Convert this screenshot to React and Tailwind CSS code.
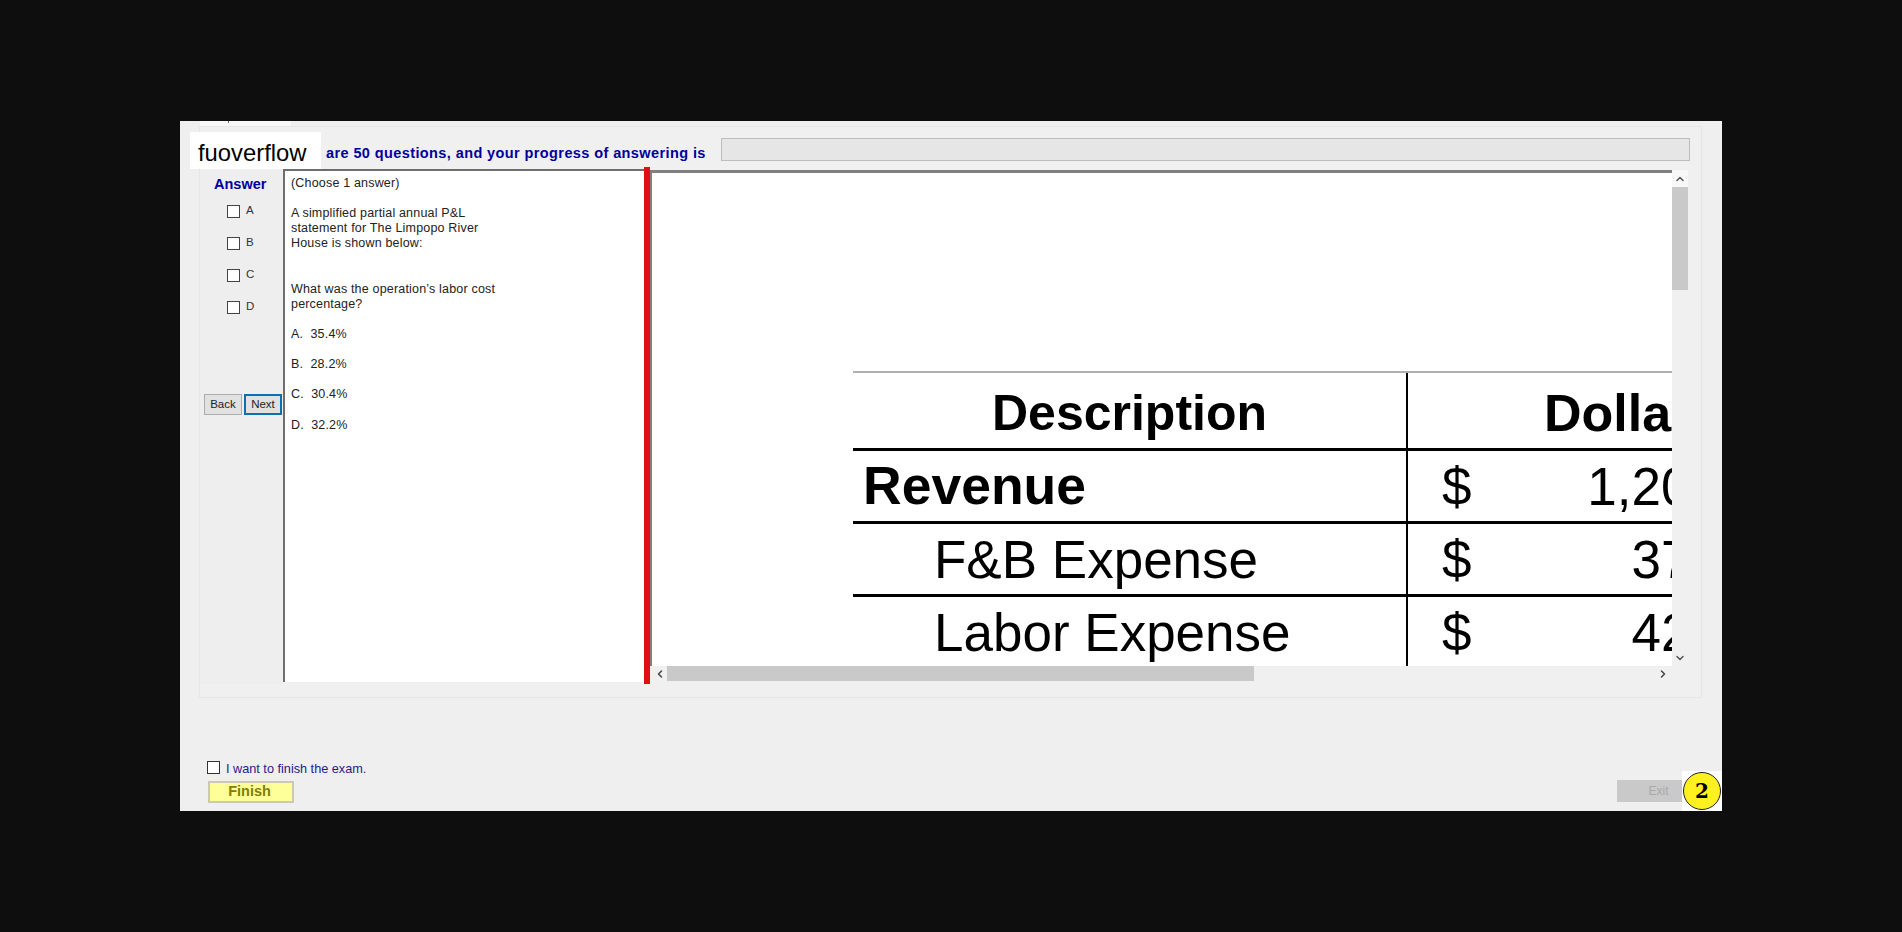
import React from "react";
import { ChevronUp, ChevronDown, ChevronLeft, ChevronRight } from "lucide-react";

const answers = ["A", "B", "C", "D"];
const choices = ["A.  35.4%", "B.  28.2%", "C.  30.4%", "D.  32.2%"];

const rows = [
  { label: "Revenue", amount: "1,200,000", bold: true },
  { label: "F&B Expense", amount: "375,000" },
  { label: "Labor Expense", amount: "425,000" },
];

const TableRow = ({ label, amount, bold }) => (
  <div className="flex h-[73px] shrink-0 border-t-[3px] border-black text-[53px] leading-none text-black">
    <div
      className={
        bold
          ? "flex w-[555px] shrink-0 items-center border-r-2 border-black pl-[10px] text-[53.5px] font-bold"
          : "flex w-[555px] shrink-0 items-center border-r-2 border-black pl-[81px]"
      }
    >
      {label}
    </div>
    <div className="flex w-[415px] shrink-0 items-center justify-between pl-[34px]">
      <span>$</span>
      <span>{amount}</span>
    </div>
  </div>
);

const App = () => {
  return (
    <div className="h-[932px] w-full overflow-hidden bg-[#0e0e0e] pl-[180px] pt-[121px] font-['Liberation_Sans',Arial,sans-serif]">
      <div className="relative flex h-[690px] w-[1542px] flex-col bg-[#efefef]">
        <div className="relative ml-[20px] h-[5px] w-[91px] bg-[#f8f8f8]">
          <div className="absolute left-[28px] top-0 h-[2px] w-[1px] bg-[#666666]"></div>
        </div>

        {/* tab page */}
        <div className="ml-[19px] flex h-[572px] w-[1503px] flex-col border border-[#e6e6e6] bg-[#f0f0f0]">
          <div className="flex h-[40px] shrink-0">
            <div className="ml-[126px] mt-[18px] w-[395px] whitespace-nowrap text-[14.5px] font-bold leading-4 tracking-[0.4px] text-[#00009a]">
              are 50 questions, and your progress of answering is
            </div>
            <div className="mt-[11px] h-[23px] w-[969px] border border-[#bdbdbd] bg-[#e6e6e6]"></div>
          </div>

          <div className="flex h-[517px] shrink-0">
            {/* answers */}
            <div className="flex w-[83px] shrink-0 flex-col bg-[#eeeeee]">
              <div className="mt-[10px] h-[18px] pl-[14px] text-[14.5px] font-bold leading-[14px] text-[#00009a]">
                Answer
              </div>
              {answers.map((a) => (
                <div key={a} className="flex h-[32px] items-center pl-[27px]">
                  <div className="h-[13px] w-[13px] border border-[#444444] bg-white"></div>
                  <span className="ml-[6px] text-[11.5px] text-[#333333]">{a}</span>
                </div>
              ))}
              <div className="ml-[4px] mt-[70px] flex gap-[2px] pt-[1px] text-[11.5px] text-[#222222]">
                <div className="flex h-[21px] w-[38px] shrink-0 items-center justify-center border border-[#adadad] bg-[#e1e1e1]">
                  Back
                </div>
                <div className="flex h-[21px] w-[38px] shrink-0 items-center justify-center border-2 border-[#0a70b4] bg-[#e1e1e1]">
                  Next
                </div>
              </div>
            </div>

            {/* question */}
            <div className="mt-[2px] h-[513px] w-[361px] shrink-0 border-l-2 border-t-2 border-[#6e6e6e] bg-white pl-[6px] pt-[5px] text-[12.5px] leading-[15px] tracking-[0.18px] text-[#222222]">
              <p>(Choose 1 answer)</p>
              <p className="mt-[15px]">
                A simplified partial annual P&amp;L
                <br />
                statement for The Limpopo River
                <br />
                House is shown below:
              </p>
              <p className="mt-[31px]">
                What was the operation’s labor cost
                <br />
                percentage?
              </p>
              {choices.map((c) => (
                <p key={c} className="mt-[15px] whitespace-pre last:mt-[15.5px]">
                  {c}
                </p>
              ))}
            </div>

            <div className="h-[517px] w-[6px] shrink-0 bg-[#e00f14]"></div>

            {/* exhibit */}
            <div className="mt-[3px] flex h-[511px] w-[1038px] shrink-0 flex-col">
              <div className="flex h-[496px] shrink-0">
                <div className="flex w-[1022px] flex-col border-l-2 border-t-[3px] border-[#808080] bg-white">
                  <div className="h-full w-full overflow-hidden">
                    <div className="ml-[201px] mt-[198px] flex h-[600px] w-[980px] flex-col">
                      <div className="flex h-[77px] shrink-0 border-t-2 border-[#b0b0b0] font-bold leading-none text-black">
                        <div className="flex w-[555px] shrink-0 items-center justify-center border-r-2 border-black pt-[4px] text-[50px]">
                          Description
                        </div>
                        <div className="flex items-center pl-[136px] pt-[4px] text-[52px]">Dollars</div>
                      </div>
                      {rows.map((r) => (
                        <TableRow key={r.label} {...r} />
                      ))}
                    </div>
                  </div>
                </div>
                <div className="flex w-[16px] flex-col bg-[#f0f0f0]">
                  <div className="flex h-[17px] items-center justify-center bg-[#f8f8f8] text-[#555555]">
                    <ChevronUp size={12} strokeWidth={3} />
                  </div>
                  <div className="h-[103px] bg-[#c9c9c9]"></div>
                  <div className="flex-1"></div>
                  <div className="flex h-[17px] items-center justify-center text-[#555555]">
                    <ChevronDown size={12} strokeWidth={3} />
                  </div>
                </div>
              </div>
              <div className="flex h-[15px] w-[1022px] items-center bg-[#f0f0f0] pl-[2px] text-[#444444]">
                <div className="flex w-[15px] justify-center">
                  <ChevronLeft size={12} strokeWidth={3} />
                </div>
                <div className="h-[15px] w-[587px] bg-[#c9c9c9]"></div>
                <div className="flex flex-1 justify-end pr-[3px]">
                  <ChevronRight size={12} strokeWidth={3} />
                </div>
              </div>
            </div>
          </div>
        </div>

        {/* bottom bar */}
        <div className="flex flex-1 items-end justify-between pb-[8px] pl-[27px] pr-[40px]">
          <div className="flex flex-col">
            <div className="flex items-center">
              <div className="h-[13px] w-[13px] border border-[#333333] bg-white"></div>
              <span className="ml-[6px] mt-[3px] text-[12.7px] leading-4 text-[#1c1c8c]">I want to finish the exam.</span>
            </div>
            <div className="ml-[1px] mt-[4px] flex h-[22px] w-[86px] items-center justify-center border-2 border-[#c9c9b4] bg-[#ffff99] pr-[3px] text-[14.5px] font-bold text-[#7f8000]">
              Finish
            </div>
          </div>
          <div className="mb-[1px] flex h-[22px] w-[65px] items-center justify-center bg-[#c9c9c9] pl-[18px] text-[12px] text-[#a9a9a9]">
            Exit
          </div>
        </div>

        {/* overlays */}
        <div className="absolute left-[10px] top-[11px] flex h-[37px] w-[131px] items-center bg-white pl-[8px] pt-[4px] text-[23.8px] leading-none text-black">
          fuoverflow
        </div>
        <div className="absolute bottom-0 right-0 flex h-[40px] w-[40px] items-center justify-center bg-white">
          <div className="flex h-[38px] w-[38px] items-center justify-center rounded-full border border-[#222222] bg-[#fff01f] font-['DejaVu_Serif',serif] text-[20px] font-bold leading-none text-black">
            2
          </div>
        </div>
      </div>
    </div>
  );
};

export default App;
